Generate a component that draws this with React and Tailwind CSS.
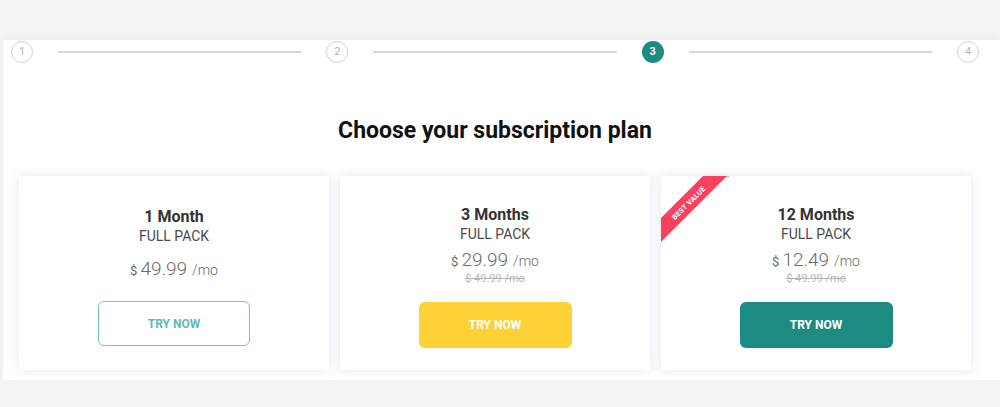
import React from "react";

function Step({ n, active }) {
  return active ? (
    <div className="w-[22px] h-[22px] rounded-full bg-[#1e8b80] flex items-center justify-center text-white text-[11px] font-bold shrink-0">
      {n}
    </div>
  ) : (
    <div className="w-[22px] h-[22px] rounded-full border-[1.5px] border-[#cfd3d6] flex items-center justify-center text-[#b0b4b8] text-[11px] shrink-0">
      {n}
    </div>
  );
}

function Line() {
  return <div className="flex-1 mx-[25px] h-[2px] bg-[#cfd6df]" />;
}

function Price({ value }) {
  return (
    <div className="flex items-baseline justify-center text-[#6b6b6b]">
      <span className="text-[13px] mr-[3px]">$</span>
      <span className="text-[19px] font-light">{value}</span>
      <span className="text-[14px] ml-[5px] font-light">/mo</span>
    </div>
  );
}

function Card({ title, price, old, variant, ribbon }) {
  const btn =
    variant === "outline"
      ? "border border-[#6fc6bd] text-[#5bbdb2] bg-white"
      : variant === "yellow"
      ? "bg-[#fed136] text-white"
      : "bg-[#1e8b80] text-white";
  return (
    <div className="relative w-[310px] h-[194px] bg-white shadow-[0_0_10px_rgba(195,200,225,0.45)] flex flex-col items-center overflow-hidden">
      {ribbon && (
        <svg className="absolute left-[-1px] top-[-1px]" width="72" height="72" viewBox="0 0 72 72">
          <polygon points="44,0 68,0 0,68 0,44" fill="#f9415f" />
          <polygon points="66,0 70,0 68,2" fill="#a81f36" />
          <text
            x="0"
            y="0"
            transform="translate(30.5 29.8) rotate(-45)"
            textAnchor="middle"
            fill="#ffffff"
            fontSize="7.2"
            fontWeight="700"
            fontFamily="Roboto, sans-serif"
            letterSpacing="0.3"
          >
            BEST VALUE
          </text>
        </svg>
      )}
      <div className={old ? "pt-[29px]" : "pt-[31px]"} />
      <div className="text-[16px] leading-[20px] font-bold text-[#333333]">{title}</div>
      <div className="text-[14px] leading-[18px] text-[#4a4a4a]">FULL PACK</div>
      {old ? (
        <>
          <div className="mt-[7px] leading-[20px]">
            <Price value={price} />
          </div>
          <div className="text-[11px] leading-[13px] text-[#b5b5b5] line-through">$ 49.99 /mo</div>
          <div className={`mt-[17px] w-[153px] h-[46px] rounded-[6px] flex items-center justify-center text-[12px] font-bold ${btn}`}>
            TRY NOW
          </div>
        </>
      ) : (
        <>
          <div className="mt-[12px] leading-[24px]">
            <Price value={price} />
          </div>
          <div className={`mt-[18px] w-[152px] h-[45px] rounded-[6px] flex items-center justify-center text-[12px] font-bold ${btn}`}>
            TRY NOW
          </div>
        </>
      )}
    </div>
  );
}

export default function App() {
  return (
    <div
      className="w-[1000px] h-[407px] bg-[#f4f4f4] flex flex-col overflow-hidden"
      style={{ fontFamily: "Roboto, 'Noto Sans', sans-serif" }}
    >
      <div className="h-[40px] shrink-0" />
      <div className="ml-[3px] h-[340px] bg-white shadow-[0_-3px_8px_rgba(0,0,0,0.03)] flex flex-col">
        <div className="ml-[8px] w-[968px] flex flex-col">
          <div className="h-[24px] flex items-center">
            <Step n={1} />
            <Line />
            <Step n={2} />
            <Line />
            <Step n={3} active />
            <Line />
            <Step n={4} />
          </div>
          <div className="mt-[52px] text-center text-[23px] leading-[30px] font-bold text-[#111111]">
            Choose your subscription plan
          </div>
          <div className="mt-[30px] px-[8px] flex gap-[11px]">
            <Card title="1 Month" price="49.99" variant="outline" />
            <Card title="3 Months" price="29.99" old variant="yellow" />
            <Card title="12 Months" price="12.49" old variant="teal" ribbon />
          </div>
        </div>
      </div>
    </div>
  );
}
